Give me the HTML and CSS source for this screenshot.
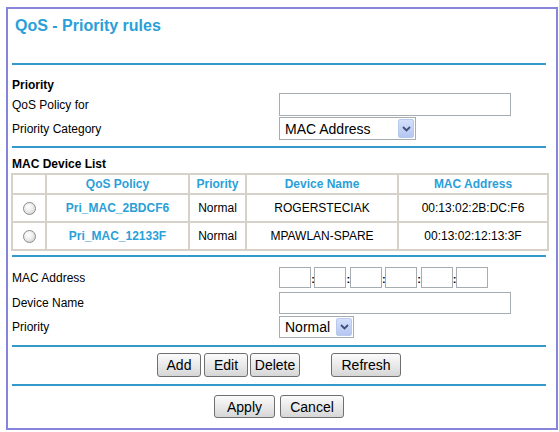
FILE: index.html
```html
<!DOCTYPE html>
<html>
<head>
<meta charset="utf-8">
<title>QoS - Priority rules</title>
<link rel="stylesheet" href="styles.css">
</head>
<body>
<div class="frame">
  <div class="title">QoS - Priority rules</div>
  <div class="rule"></div>

  <div class="section-head sh-priority">Priority</div>
  <div class="form-row fr-policy">
    <span class="label">QoS Policy for</span>
    <input class="text text-wide" type="text">
  </div>
  <div class="form-row fr-category">
    <span class="label">Priority Category</span>
    <span class="select select-cat">
      <select><option>MAC Address</option></select>
      <span class="arrow"><svg width="9" height="6" viewBox="0 0 9 6"><path d="M1 1 L4.5 4.5 L8 1" fill="none" stroke="#3f4f7a" stroke-width="1.8"/></svg></span>
    </span>
  </div>
  <div class="rule rule-2"></div>

  <div class="section-head sh-list">MAC Device List</div>
  <table class="devices">
    <colgroup>
      <col class="c1"><col class="c2"><col class="c3"><col class="c4"><col class="c5">
    </colgroup>
    <thead>
      <tr><th></th><th>QoS Policy</th><th>Priority</th><th>Device Name</th><th>MAC Address</th></tr>
    </thead>
    <tbody>
      <tr><td><span class="radio"></span></td><td class="policy">Pri_MAC_2BDCF6</td><td>Normal</td><td>ROGERSTECIAK</td><td>00:13:02:2B:DC:F6</td></tr>
      <tr><td><span class="radio"></span></td><td class="policy">Pri_MAC_12133F</td><td>Normal</td><td>MPAWLAN-SPARE</td><td>00:13:02:12:13:3F</td></tr>
    </tbody>
  </table>
  <div class="rule rule-3"></div>

  <div class="form-row fr-mac">
    <span class="label">MAC Address</span>
    <span class="mac">
      <input class="text oct" type="text"><span class="colon">:</span>
      <input class="text oct" type="text"><span class="colon">:</span>
      <input class="text oct" type="text"><span class="colon">:</span>
      <input class="text oct" type="text"><span class="colon">:</span>
      <input class="text oct" type="text"><span class="colon">:</span>
      <input class="text oct" type="text">
    </span>
  </div>
  <div class="form-row fr-name">
    <span class="label">Device Name</span>
    <input class="text text-wide text-name" type="text">
  </div>
  <div class="form-row fr-prio">
    <span class="label">Priority</span>
    <span class="select select-prio">
      <select><option>Normal</option></select>
      <span class="arrow"><svg width="9" height="6" viewBox="0 0 9 6"><path d="M1 1 L4.5 4.5 L8 1" fill="none" stroke="#3f4f7a" stroke-width="1.8"/></svg></span>
    </span>
  </div>
  <div class="rule rule-4"></div>

  <div class="buttons btns-edit">
    <button class="btn b-add">Add</button>
    <button class="btn b-edit">Edit</button>
    <button class="btn b-delete">Delete</button>
    <button class="btn b-refresh">Refresh</button>
  </div>
  <div class="rule rule-5"></div>

  <div class="buttons btns-apply">
    <button class="btn b-apply">Apply</button>
    <button class="btn b-cancel">Cancel</button>
  </div>
</div>
</body>
</html>
```
FILE: styles.css
```css
html, body {
  margin: 0;
  padding: 0;
  background: #ffffff;
}

.frame {
  margin: 7px 0 0 6px;
  width: 552px;
  height: 423px;
  box-sizing: border-box;
  border: 2px solid #8784dc;
  padding: 0 10px 0 4px;
  font-family: "Liberation Sans", Arial, sans-serif;
  font-size: 12px;
  color: #000;
}

.title {
  height: 54px;
  box-sizing: border-box;
  padding: 8px 0 0 3px;
  font-size: 16px;
  line-height: 18px;
  font-weight: bold;
  color: #2a9fd8;
}

.rule {
  height: 2px;
  background: #3399cc;
}

.rule-2 { margin-top: 6px; }
.rule-3 { margin-top: 4px; }
.rule-4 { margin-top: 7px; }
.rule-5 { margin-top: 7px; }

.section-head {
  font-weight: bold;
  line-height: 16px;
}
.sh-priority { margin-top: 12px; }
.sh-list { margin-top: 8px; }

.form-row {
  display: grid;
  grid-template-columns: 267px auto;
  align-items: center;
  height: 23px;
}
.fr-category { margin-top: 1px; }
.fr-mac { margin-top: 10px; height: 21px; }
.fr-name { margin-top: 4px; height: 22px; }
.fr-prio { margin-top: 2px; height: 22px; }

.label {
  line-height: 16px;
}

.text {
  box-sizing: border-box;
  border: 1px solid #a5acb2;
  background: #fff;
  margin: 0;
  padding: 0 3px;
  font: 13px "Liberation Sans", Arial, sans-serif;
  outline: none;
}
.text-wide {
  width: 232px;
  height: 23px;
}
.text-name { height: 22px; }

.mac {
  display: flex;
  align-items: center;
  height: 21px;
}
.oct {
  width: 32px;
  height: 21px;
}
.colon {
  width: 3.4px;
  font-size: 11px;
  font-weight: bold;
  line-height: 21px;
  overflow: visible;
  text-indent: 0.2px;
  padding-top: 3px;
  box-sizing: border-box;
}

.select {
  position: relative;
  display: block;
  height: 23px;
}
.select select {
  -webkit-appearance: none;
  appearance: none;
  box-sizing: border-box;
  width: 100%;
  height: 100%;
  margin: 0;
  border: 1px solid #a5acb2;
  border-radius: 0;
  background: #fff;
  padding: 0 0 0 5px;
  font: 14px "Liberation Sans", Arial, sans-serif;
  color: #000;
}
.select-cat { width: 137px; }
.select-prio { width: 75px; height: 22px; }

.select .arrow {
  position: absolute;
  top: 2px;
  right: 2px;
  bottom: 2px;
  width: 16px;
  border-radius: 2px;
  background: linear-gradient(#d4e0fb, #b4c6f2);
  border: 1px solid #b9c9ee;
  box-sizing: border-box;
  display: flex;
  align-items: center;
  justify-content: center;
}

.devices {
  margin: 1px 0 0 -1px;
  width: 536px;
  table-layout: fixed;
  border-collapse: collapse;
  border: 2px solid #d6d2ca;
}
.devices .c1 { width: 34px; }
.devices .c2 { width: 143px; }
.devices .c3 { width: 57px; }
.devices .c4 { width: 152px; }
.devices .c5 { width: 150px; }

.devices th,
.devices td {
  border: 2px solid #d6d2ca;
  padding: 0;
  text-align: center;
  font-size: 12px;
}
.devices th {
  height: 18px;
  color: #2a9fd8;
  font-weight: bold;
}
.devices td {
  height: 26px;
}
.devices td.policy {
  color: #2a9fd8;
  font-weight: bold;
}

.radio {
  display: inline-block;
  vertical-align: middle;
  width: 13px;
  height: 13px;
  box-sizing: border-box;
  border-radius: 50%;
  border: 1px solid #8c8c8c;
  background: radial-gradient(circle at 40% 35%, #ffffff 0%, #f0f0f0 40%, #c9c9c9 100%);
}

.buttons {
  display: flex;
  justify-content: center;
}
.btns-edit { margin-top: 6px; height: 24px; }
.btns-apply { margin-top: 9px; height: 23px; }

.btn {
  box-sizing: border-box;
  height: 100%;
  margin: 0;
  padding: 0;
  border: 1px solid #6f6f6f;
  border-radius: 3px;
  background: linear-gradient(#fbfbfb, #e6e6e6 60%, #d6d6d6);
  font: 14px "Liberation Sans", Arial, sans-serif;
  color: #000;
}
.b-add { width: 44px; }
.b-edit { width: 44px; margin-left: 3px; }
.b-delete { width: 50px; margin-left: 2px; }
.b-refresh { width: 70px; margin-left: 31px; }
.b-apply { width: 61px; }
.b-cancel { width: 64px; margin-left: 5px; }
```
